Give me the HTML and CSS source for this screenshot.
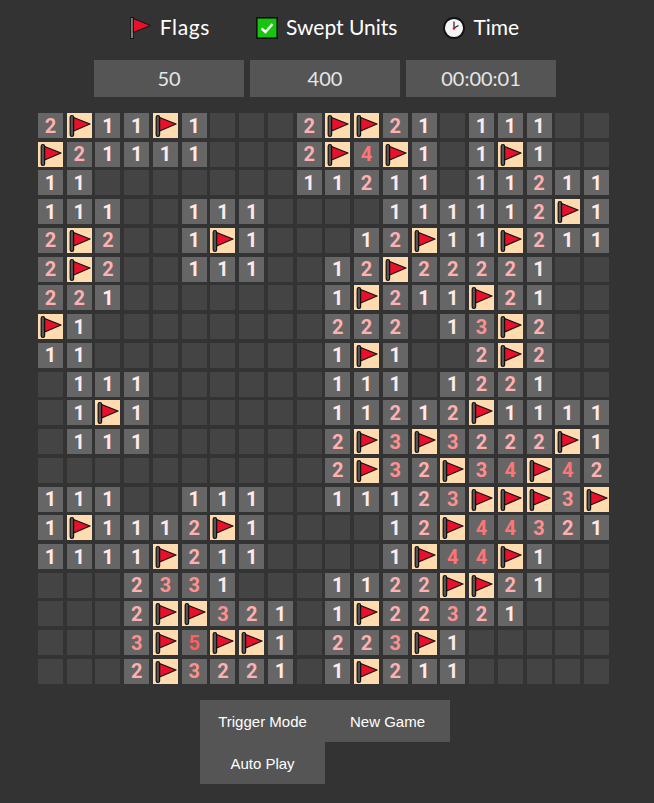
FILE: index.html
```html
<!doctype html>
<html lang="en">
<head>
    <meta charset="UTF-8">
    <title>Minesweeper</title>
    <link rel="stylesheet" href="styles.css">
</head>
<body>
    <svg class="sprites" width="0" height="0">
        <symbol id="flag" viewBox="0 0 25 25">
            <rect x="3.2" y="2.5" width="3.4" height="21" rx="1.7" fill="#555" stroke="#111" stroke-width="1.2"/>
            <path d="M6.6 4.5 L23 11 L6.6 18 Z" fill="#e8102a" stroke="#111" stroke-width="1.3" stroke-linejoin="round"/>
        </symbol>
    </svg>
    <div id="wrap">
        <div class="stats">
            <div class="stat-label">
                <svg width="22" height="22" viewBox="0 0 22 22">
                    <rect x="0.7" y="0.5" width="2.6" height="21" fill="#999" stroke="#111" stroke-width="1"/>
                    <path d="M3.3 1.5 L20.5 8.5 L3.3 15.5 Z" fill="#e8102a" stroke="#111" stroke-width="1" stroke-linejoin="round"/>
                </svg>
                <span>Flags</span>
            </div>
            <div class="stat-label">
                <svg width="22" height="22" viewBox="0 0 22 22">
                    <rect x="0.8" y="0.8" width="20.4" height="20.4" fill="#16c60c" stroke="#111" stroke-width="1.6"/>
                    <path d="M5.5 11.5 L9.5 15 L16.5 7" fill="none" stroke="#fff" stroke-width="2.4"/>
                </svg>
                <span>Swept Units</span>
            </div>
            <div class="stat-label">
                <svg width="22" height="22" viewBox="0 0 22 22">
                    <circle cx="11" cy="11" r="10" fill="#f4f4f4" stroke="#111" stroke-width="1.8"/>
                    <path d="M11 11 V4.5 M11 11 L15.5 8.5" fill="none" stroke="#222" stroke-width="1.2"/>
                    <circle cx="11" cy="11.5" r="1.3" fill="#e8102a"/>
                </svg>
                <span>Time</span>
            </div>
        </div>
        <div class="counters">
            <div class="counter">50</div>
            <div class="counter">400</div>
            <div class="counter">00:00:01</div>
        </div>
        <div id="board"></div>
        <div class="buttons">
            <button>Trigger Mode</button>
            <button>New Game</button>
            <button>Auto Play</button>
        </div>
    </div>
    <script src="board.js"></script>
</body>
</html>
```
FILE: styles.css
```css
* {
    margin: 0;
    padding: 0;
    box-sizing: border-box;
}

body {
    background: #333;
    color: #fff;
    font-family: "Lato", sans-serif;
    overflow: hidden;
}

.sprites {
    position: absolute;
}

#wrap {
    width: 650px;
    display: flex;
    flex-direction: column;
    align-items: center;
}

.stats {
    display: flex;
    justify-content: center;
    align-items: center;
    gap: 46px;
    height: 56px;
    padding-right: 1px;
}

.stat-label {
    display: flex;
    align-items: center;
    gap: 8px;
    font-size: 21px;
}

.stat-label span {
    padding-bottom: 3px;
}

.stat-label:first-child span {
    letter-spacing: 0.6px;
}

.counters {
    display: flex;
    gap: 6px;
    margin-top: 4px;
}

.counter {
    width: 150px;
    height: 37px;
    line-height: 37px;
    background: #555;
    color: #e6e6e6;
    text-align: center;
    font-size: 20px;
}

#board {
    display: grid;
    grid-template-columns: repeat(20, 25px);
    grid-auto-rows: 25px;
    gap: 3.74px;
    margin: 16px 3px 0 0;
}

.cell {
    background: #444;
    display: flex;
    align-items: center;
    justify-content: center;
    font-family: "Roboto", sans-serif;
    font-weight: 700;
    font-size: 20px;
}

.cell.open { background: #666; }
.cell.flag { background: #ffdbb0; }
.n1 { color: #ffeaea; }
.n2 { color: #ffb0b0; }
.n3 { color: #ff9090; }
.n4 { color: #ff7575; }
.n5 { color: #ff5f5f; }

.buttons {
    display: flex;
    flex-wrap: wrap;
    width: 250px;
    margin-top: 16px;
}

.buttons button {
    width: 125px;
    height: 42px;
    border: 0;
    padding-top: 2px;
    background: #555;
    color: #fff;
    font-family: "Liberation Sans", Arial, sans-serif;
    font-size: 15px;
}
```
FILE: board.js
```js
// . blank, F flag, digits as shown
const rows = [
    '2F11F1...2FF21.111..',
    'F21111...2F4F1.1F1..',
    '11.......11211.11211',
    '111..111....111112F1',
    '2F2..1F1...12F11F211',
    '2F2..111..12F22221..',
    '221.......1F211F21..',
    'F1........222.13F2..',
    '11........1F1..2F2..',
    '.111......111.1221..',
    '.1F1......11212F1111',
    '.111......2F3F3222F1',
    '..........2F32F34F42',
    '111..111..11123FFF3F',
    '1F1112F1....12F44321',
    '1111F211....1F44F1..',
    '...2331...1122FF21..',
    '...2FF321.1F22321...',
    '...3F5FF1.223F1.....',
    '...2F3221.1F211.....'
];

const board = document.getElementById('board');
rows.forEach((row) => {
    for (const ch of row) {
        const cell = document.createElement('div');
        cell.className = 'cell';
        if (ch === 'F') {
            cell.classList.add('flag');
            cell.innerHTML = '<svg width="25" height="25"><use href="#flag"/></svg>';
        } else if (ch !== '.') {
            cell.classList.add('open', 'n' + ch);
            cell.textContent = ch;
        }
        board.appendChild(cell);
    }
});
```
